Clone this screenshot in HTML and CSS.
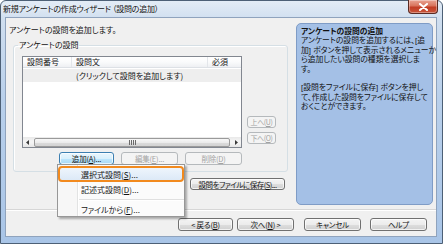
FILE: index.html
```html
<!DOCTYPE html>
<html lang="ja">
<head>
<meta charset="utf-8">
<title>新規アンケートの作成ウィザード</title>
<link rel="stylesheet" href="styles.css">
</head>
<body>
<div class="window">
  <div class="titlebar">
    <span class="title">新規アンケートの作成ウィザード （設問の追加）</span>
    <span class="close"><svg width="11" height="8" viewBox="0 0 11 8"><path d="M2 1 L9 7 M9 1 L2 7" stroke="#fff" stroke-width="2" stroke-linecap="round"/></svg></span>
  </div>
  <div class="client">
    <div class="main">
      <div class="leftcol">
        <div class="intro">アンケートの設問を追加します。</div>
        <fieldset class="group">
          <legend>アンケートの設問</legend>
          <div class="listrow">
            <div class="list">
              <div class="lv-head">
                <span class="hc">設問番号</span>
                <span class="hc">設問文</span>
                <span class="hc">必須</span>
              </div>
              <div class="lv-row">
                <span class="rc"></span>
                <span class="rc">(クリックして設問を追加します)</span>
                <span class="rc"></span>
              </div>
              <div class="lv-space"></div>
              <div class="hscroll">
                <span class="arrow"><svg width="4" height="5" viewBox="0 0 4 5"><path d="M3 0 L0 2.5 L3 5Z" fill="#3a3a3a"/></svg></span>
                <span class="thumb"><span class="grip"></span></span>
                <span class="arrow"><svg width="4" height="5" viewBox="0 0 4 5"><path d="M1 0 L4 2.5 L1 5Z" fill="#3a3a3a"/></svg></span>
              </div>
            </div>
            <div class="sidebtns">
              <span class="btn small disabled">上へ(<u>U</u>)</span>
              <span class="btn small disabled">下へ(<u>O</u>)</span>
            </div>
          </div>
          <div class="actions">
            <span class="btn hot w55">追加(<u>A</u>)...</span>
            <span class="btn disabled w57">編集(<u>E</u>)...</span>
            <span class="btn disabled w57">削除(<u>D</u>)</span>
          </div>
        </fieldset>
        <span class="btn save">設問をファイルに保存(<u>S</u>)...</span>
      </div>
      <div class="help">
        <div class="help-title">アンケートの設問の追加</div>
        <p>アンケートの設問を追加するには、[追<br>加] ボタンを押して表示されるメニューか<br>ら追加したい設問の種類を選択しま<br>す。</p>
        <p>[設問をファイルに保存] ボタンを押し<br>て、作成した設問をファイルに保存して<br>おくことができます。</p>
      </div>
    </div>
    <div class="footer">
      <span class="btn back">&lt; 戻る(<u>B</u>)</span>
      <span class="btn next">次へ(<u>N</u>) &gt;</span>
      <span class="btn cancel">キャンセル</span>
      <span class="btn helpbtn">ヘルプ</span>
    </div>
  </div>
  <div class="menu">
    <div class="mi active">選択式設問(<u>S</u>)...</div>
    <div class="mi">記述式設問(<u>D</u>)...</div>
    <div class="msep"></div>
    <div class="mi last">ファイルから(<u>F</u>)...</div>
  </div>
</div>
</body>
</html>
```

FILE: styles.css
```css
* { box-sizing: border-box; }
html, body { margin: 0; padding: 0; }
body {
  width: 443px;
  height: 244px;
  overflow: hidden;
  font-family: "Noto Sans CJK JP", "Noto Sans", sans-serif;
  font-size: 8px;
  font-feature-settings: "palt";
  color: #141414;
  background: #fff;
}
u { text-decoration: underline; text-underline-offset: 1px; }

.window {
  position: relative;
  width: 443px;
  height: 244px;
  border: 1px solid #4d6076;
  border-radius: 6px 6px 0 0;
  background: linear-gradient(180deg, #e3ecf6 0%, #cfdeef 8%, #b9d0eb 40%, #a9c5e7 100%);
  padding: 0 5px 6px 4px;
  display: flex;
  flex-direction: column;
}

.titlebar {
  height: 16px;
  margin: 0 -5px 0 -4px;
  padding-left: 2px;
  display: flex;
  align-items: center;
}
.title {
  flex: 1;
  font-size: 8px;
  letter-spacing: -0.2px;
  color: #111;
  line-height: 12px;
  text-shadow: 0 0 4px rgba(255,255,255,0.9);
}
.close {
  align-self: flex-start;
  margin-top: -1px;
  margin-right: 4px;
  width: 30px;
  height: 14px;
  border: 1px solid #5a2a22;
  border-top: none;
  border-radius: 0 0 4px 4px;
  background: linear-gradient(180deg, #e9a493 0%, #d8735c 45%, #c23d25 55%, #c8553a 100%);
  box-shadow: inset 0 0 0 1px rgba(255,255,255,0.35);
  display: flex;
  align-items: center;
  justify-content: center;
}

.client {
  flex: 1;
  border: 1px solid #8fa3bd;
  background: #f0f0f0;
  display: flex;
  flex-direction: column;
}

.main {
  height: 191px;
  display: flex;
}

.leftcol {
  flex: 1;
  display: flex;
  flex-direction: column;
}
.intro {
  margin: 6px 0 0 3px;
  line-height: 12px;
}

.group {
  margin: 3px 2px 0 7px;
  padding: 5px 0 6px 8px;
  border: 1px solid #d5dfe5;
  border-radius: 3px;
  box-shadow: inset 1px 1px 0 #fff;
  min-width: 0;
}
.group legend {
  padding: 0 1px;
  margin-left: -4px;
  line-height: 12px;
}

.listrow {
  display: flex;
}
.list {
  width: 220px;
  height: 92px;
  border: 1px solid #828790;
  background: #fff;
  display: flex;
  flex-direction: column;
}
.lv-head, .lv-row {
  display: grid;
  grid-template-columns: 49px 136px 1fr;
}
.lv-head {
  height: 11px;
  background: linear-gradient(180deg, #ffffff 0%, #fafbfc 50%, #eef0f3 100%);
  border-bottom: 1px solid #dde1e6;
}
.hc {
  padding-left: 4px;
  line-height: 10px;
  border-right: 1px solid #e3e6ea;
}
.hc:last-child { border-right: none; }
.lv-row {
  height: 13px;
  margin-top: 1px;
  background: #eeeeee;
}
.rc {
  padding-left: 4px;
  line-height: 13px;
  white-space: nowrap;
}
.lv-space { flex: 1; }
.hscroll {
  height: 10px;
  display: flex;
  align-items: center;
  background: linear-gradient(180deg, #e9e9e9, #f4f4f4 40%, #f4f4f4 60%, #e6e6e6);
}
.arrow {
  width: 10px;
  height: 10px;
  display: flex;
  align-items: center;
  justify-content: center;
}
.thumb {
  flex: 1;
  height: 9px;
  margin: 0 1px;
  border: 1px solid #9a9a9a;
  border-radius: 2px;
  background: linear-gradient(180deg, #f8f8f8 0%, #ececec 50%, #dcdcdc 51%, #d3d3d3 100%);
  display: flex;
  align-items: center;
  justify-content: center;
}
.grip {
  width: 7px;
  height: 5px;
  background: repeating-linear-gradient(90deg, #6a6a6a 0 1px, transparent 1px 2px);
}

.sidebtns {
  margin-left: 5px;
  width: 29px;
  display: flex;
  flex-direction: column;
  justify-content: flex-end;
  gap: 4px;
  padding-bottom: 4px;
}

.btn {
  height: 13px;
  border: 1px solid #707070;
  border-radius: 3px;
  background: linear-gradient(180deg, #f4f4f4 0%, #ececec 50%, #dedede 51%, #d0d0d0 100%);
  box-shadow: inset 0 0 0 1px rgba(255,255,255,0.7);
  display: flex;
  align-items: center;
  justify-content: center;
  white-space: nowrap;
  line-height: 11px;
  font-size: 7.5px;
  letter-spacing: -0.2px;
  color: #141414;
}
.btn.small {
  height: 12px;
  font-size: 7px;
  letter-spacing: -0.4px;
  padding: 0;
}
.btn.disabled {
  border-color: #b5b9bc;
  background: #f4f4f4;
  box-shadow: none;
  color: #a3a3a3;
}
.btn.hot {
  border-color: #3c7fb1;
  background: linear-gradient(180deg, #eaf6fd 0%, #d9f0fc 50%, #bee6fd 51%, #a7d9f5 100%);
}
.w55 { width: 55px; }
.w57 { width: 57px; }

.actions {
  width: 220px;
  margin-top: 4px;
  display: flex;
  justify-content: flex-end;
  gap: 7px;
}

.save {
  align-self: flex-end;
  margin: 6px 5px 0 0;
  width: 95px;
  height: 12px;
  letter-spacing: -0.5px;
}

.help {
  width: 137px;
  margin: 5px 3px 4px 6px;
  border: 1px solid #7f9cc6;
  border-radius: 5px;
  background: #a4c0e6;
  padding: 3px 3px 0 4px;
  font-family: "Liberation Sans", "Noto Sans CJK JP", sans-serif;
  line-height: 9.4px;
  font-size: 7.8px;
  color: #111;
}
.help-title { font-weight: bold; }
.help p { margin: 0 0 9.4px 0; white-space: nowrap; }

.footer {
  flex: 1;
  border-top: 1px solid #d6d6d6;
  box-shadow: inset 0 1px 0 #fff;
  display: flex;
  justify-content: flex-end;
  padding: 8px 9px 0 0;
}
.footer .btn { height: 13px; }
.back { width: 55px; margin-right: 4px; }
.next { width: 57px; margin-right: 10px; }
.cancel { width: 57px; margin-right: 9px; }
.helpbtn { width: 57px; }

.menu {
  position: absolute;
  left: 56px;
  top: 163px;
  width: 128px;
  border: 1px solid #979797;
  background: linear-gradient(90deg, #f7f7f7 0 19px, #e2e3e3 19px 20px, #ffffff 20px 21px, #fbfbfb 21px);
  box-shadow: 2px 2px 2px rgba(0,0,0,0.3);
  padding: 1px 0 0 0;
}
.mi {
  height: 15px;
  padding-left: 23px;
  display: flex;
  align-items: center;
  white-space: nowrap;
}
.mi.active {
  height: 16px;
  padding-left: 21px;
  border: 2px solid #f28a1e;
  border-radius: 4px;
  background: linear-gradient(180deg, #eef5fc 0%, #dce9f7 100%);
}
.mi.last { height: 13px; }
.msep {
  height: 6px;
  margin-left: 21px;
  background: linear-gradient(180deg, transparent 0 2px, #e0e0e0 2px 3px, #fff 3px 4px, transparent 4px);
}
```
